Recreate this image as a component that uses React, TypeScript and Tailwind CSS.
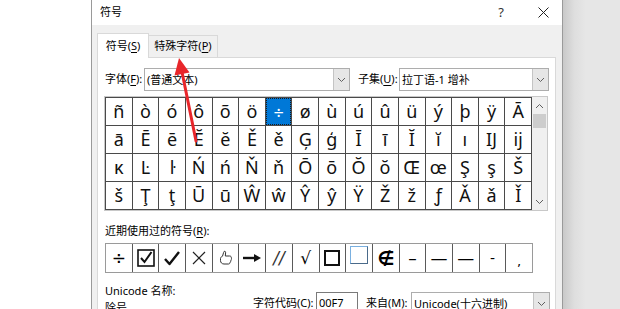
import React from 'react'

const rows: string[][] = [
  ['ñ', 'ò', 'ó', 'ô', 'õ', 'ö', '÷', 'ø', 'ù', 'ú', 'û', 'ü', 'ý', 'þ', 'ÿ', 'Ā'],
  ['ā', 'Ē', 'ē', 'Ĕ', 'ĕ', 'Ě', 'ě', 'Ģ', 'ģ', 'Ī', 'ī', 'Ĭ', 'ĭ', 'ı', 'Ĳ', 'ĳ'],
  ['ĸ', 'Ŀ', 'ŀ', 'Ń', 'ń', 'Ň', 'ň', 'Ō', 'ō', 'Ŏ', 'ŏ', 'Œ', 'œ', 'Ş', 'ş', 'Š'],
  ['š', 'Ţ', 'ţ', 'Ū', 'ū', 'Ŵ', 'ŵ', 'Ŷ', 'ŷ', 'Ÿ', 'Ž', 'ž', 'ƒ', 'Ǎ', 'ǎ', 'Ǐ'],
]

const ui = "font-['Noto_Sans','Noto_Sans_CJK_SC',sans-serif] text-[11px] text-black"

function Chevron({ className = '' }: { className?: string }) {
  return (
    <svg width="9" height="6" viewBox="0 0 9 6" className={className}>
      <polyline points="1,1 4.5,4.5 8,1" fill="none" stroke="#606060" strokeWidth="1" />
    </svg>
  )
}

function Select({ value, width }: { value: string; width: string }) {
  return (
    <div className={`flex h-[23px] shrink-0 ${width} items-stretch border border-[#adadad] bg-white`}>
      <div className="flex flex-1 items-center whitespace-nowrap pl-[2px] text-[11px] leading-none">{value}</div>
      <div className="flex w-[16px] items-center justify-center border-l border-[#c4c4c4] bg-[#e6e6e6]">
        <Chevron />
      </div>
    </div>
  )
}

function Key({ k }: { k: string }) {
  return (
    <>
      (<span className="underline underline-offset-2">{k}</span>)
    </>
  )
}

function RecentCell({ children }: { children: React.ReactNode }) {
  return (
    <div className="flex items-center justify-center bg-white font-['DejaVu_Sans',sans-serif] text-[17px] leading-none">
      {children}
    </div>
  )
}

export default function App() {
  return (
    <div className={`relative flex h-[309px] w-[620px] overflow-hidden bg-white ${ui}`}>
      <div className="w-[91px] shrink-0 bg-white" />

      {/* dialog */}
      <div className="flex h-[309px] w-[472px] shrink-0 flex-col overflow-hidden border-x border-[#9a9a9a] bg-[#f0f0f0]">
        <div className="flex h-[25px] shrink-0 items-center bg-white pl-[8px]">
          <span>符号</span>
          <span className="ml-auto mr-[34px] text-[13px] text-[#333]">?</span>
          <svg width="11" height="11" viewBox="0 0 11 11" className="mr-[13px]">
            <path d="M0.5 0.5 L10.5 10.5 M10.5 0.5 L0.5 10.5" stroke="#222" strokeWidth="1" />
          </svg>
        </div>

        <div className="flex shrink-0 flex-col pl-[5px] pr-[6px] pt-[8px]">
          {/* tabs */}
          <div className="flex shrink-0 items-end">
            <div className="relative z-10 -mb-px flex h-[25px] w-[52px] items-center justify-center whitespace-nowrap border-x border-t border-[#d9d9d9] bg-white">
              符号<Key k="S" />
            </div>
            <div className="flex h-[22px] w-[69px] items-center justify-center whitespace-nowrap border-r border-t border-[#d9d9d9] bg-[#f0f0f0]">
              特殊字符<Key k="P" />
            </div>
          </div>

          {/* panel */}
          <div className="flex h-[260px] shrink-0 flex-col border border-b-0 border-[#d9d9d9] bg-white pl-[7px] pt-[10px]">
            <div className="flex shrink-0 items-center whitespace-nowrap">
              <span className="w-[39px] shrink-0">字体<Key k="F" />:</span>
              <Select value="(普通文本)" width="w-[206px]" />
              <span className="ml-[8px] w-[41px] shrink-0">子集<Key k="U" />:</span>
              <Select value="拉丁语-1 增补" width="w-[150px]" />
            </div>

            {/* symbol grid */}
            <div className="-ml-px mt-[5px] flex w-[444px] shrink-0 border border-[#c8c8c8]">
              <div className="grid h-[113px] w-[427px] grid-cols-[repeat(16,1fr)] grid-rows-[repeat(4,1fr)] gap-px border border-[#4a4a4a] bg-[#4a4a4a]">
                {rows.flat().map((c, i) =>
                  c === '÷' ? (
                    <div
                      key={i}
                      className="flex items-center justify-center bg-[#0078d7] font-['Noto_Sans',sans-serif] text-[18px] leading-none text-white outline-1 -outline-offset-1 outline-dotted outline-[#1a1a1a]"
                    >
                      {c}
                    </div>
                  ) : (
                    <div
                      key={i}
                      className="flex items-center justify-center bg-white pb-[2px] font-['Noto_Sans',sans-serif] text-[18px] leading-none text-[#111]"
                    >
                      {c}
                    </div>
                  )
                )}
              </div>
              <div className="flex w-[15px] flex-col items-center bg-[#f0f0f0]">
                <Chevron className="mt-[6px] rotate-180" />
                <div className="mt-[5px] h-[14px] w-[13px] bg-[#cdcdcd]" />
                <Chevron className="mb-[5px] mt-auto" />
              </div>
            </div>

            <div className="mt-[12px] shrink-0 whitespace-nowrap leading-[16px]">
              近期使用过的符号<Key k="R" />:
            </div>

            {/* recent symbols */}
            <div className="mt-[4px] grid h-[30px] w-[428px] shrink-0 grid-cols-[repeat(16,1fr)] gap-px border border-[#9a9a9a] bg-[#5a5a5a]">
              <RecentCell>÷</RecentCell>
              <RecentCell>
                <svg width="20" height="20" viewBox="0 0 20 20">
                  <rect x="2" y="2" width="16" height="16" fill="none" stroke="#111" strokeWidth="1.6" />
                  <path d="M5 10 L8.5 14 L15.5 4" fill="none" stroke="#111" strokeWidth="2" />
                </svg>
              </RecentCell>
              <RecentCell>
                <svg width="18" height="16" viewBox="0 0 18 16">
                  <path d="M2 9 L6.5 14 L16 2" fill="none" stroke="#111" strokeWidth="2.4" strokeLinejoin="round" />
                </svg>
              </RecentCell>
              <RecentCell>
                <svg width="14" height="14" viewBox="0 0 14 14">
                  <path d="M1 1 L13 13 M13 1 L1 13" stroke="#222" strokeWidth="1.2" />
                </svg>
              </RecentCell>
              <RecentCell>
                <svg width="14" height="16" viewBox="0 0 14 16">
                  <path
                    d="M5 1.5 C6 1 6.8 1.6 6.6 2.8 L6.3 6 L10.5 6 C12 6 12.6 7 12.2 8 C12.8 8.6 12.6 9.6 11.8 10 C12.2 10.8 11.8 11.8 11 12 C11.2 13 10.6 14 9.5 14 L5 14 C3 14 1.5 12.6 1.5 10.6 L1.5 8.5 C1.5 7.4 2.5 6.6 3.5 6.2 L4.6 2.5 Z"
                    fill="none"
                    stroke="#333"
                    strokeWidth="1"
                  />
                </svg>
              </RecentCell>
              <RecentCell>
                <svg width="20" height="10" viewBox="0 0 20 10">
                  <path d="M1 5 H14" stroke="#111" strokeWidth="2.4" />
                  <path d="M12 1 L19 5 L12 9 Z" fill="#111" />
                </svg>
              </RecentCell>
              <RecentCell>
                <span className="italic text-[#333]">//</span>
              </RecentCell>
              <RecentCell>√</RecentCell>
              <RecentCell>
                <div className="h-[16px] w-[16px] border-2 border-[#111]" />
              </RecentCell>
              <RecentCell>
                <div className="mb-[6px] h-[18px] w-[18px] border border-[#4a6a8a] border-l-[#7ab0e0] border-t-[#7ab0e0]" />
              </RecentCell>
              <RecentCell>
                <span className="text-[19px] font-bold italic">∉</span>
              </RecentCell>
              <RecentCell>–</RecentCell>
              <RecentCell>—</RecentCell>
              <RecentCell>—</RecentCell>
              <RecentCell>
                <span className="text-[14px]">-</span>
              </RecentCell>
              <RecentCell>
                <span className="pt-[6px] text-[13px]">,</span>
              </RecentCell>
            </div>

            {/* bottom */}
            <div className="mt-[10px] flex shrink-0 items-start whitespace-nowrap">
              <div className="flex w-[148px] shrink-0 flex-col leading-[16px]">
                <span>Unicode 名称:</span>
                <span className="mt-[1px]">除号</span>
              </div>
              <div className="mt-[9px] flex items-center">
                <span className="w-[63px] shrink-0">字符代码<Key k="C" />:</span>
                <div className="flex h-[23px] w-[42px] shrink-0 items-center border border-[#7a7a7a] bg-white pl-[2px]">
                  00F7
                </div>
                <span className="ml-[8px] w-[45px] shrink-0">来自<Key k="M" />:</span>
                <Select value="Unicode(十六进制)" width="w-[139px]" />
              </div>
            </div>
          </div>
        </div>
      </div>

      {/* background window area */}
      <div className="flex-1 bg-[linear-gradient(to_right,#c9c9c9,#dedede_20%,#e6e6e6_40%,#e6e6e6)]" />

      {/* red annotation arrow */}
      <svg className="pointer-events-none absolute left-0 top-0" width="620" height="309">
        <line x1="196" y1="141" x2="182" y2="72" stroke="#e8262b" strokeWidth="3" strokeLinecap="round" />
        <polygon points="179,58 189.5,72.5 174.5,75.5" fill="#e8262b" />
      </svg>
    </div>
  )
}
